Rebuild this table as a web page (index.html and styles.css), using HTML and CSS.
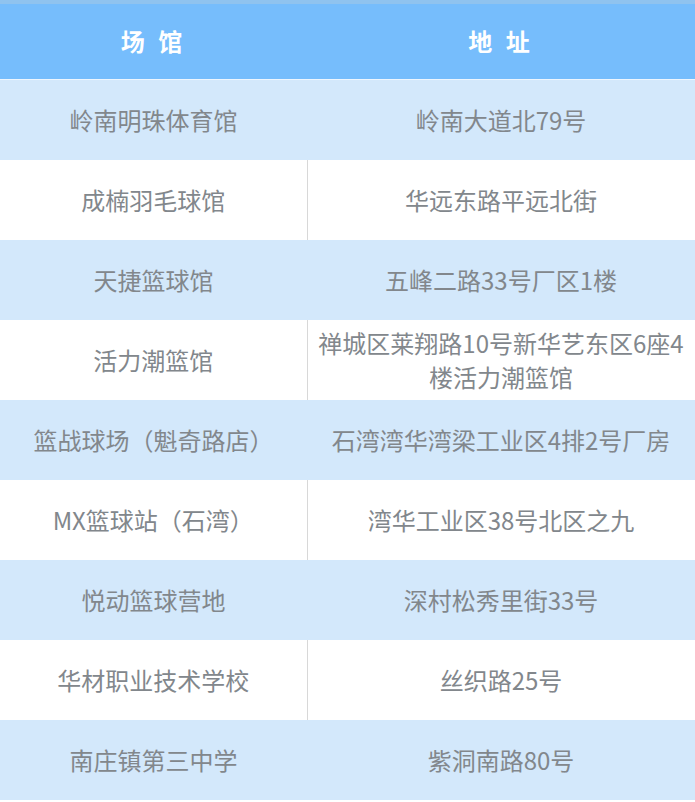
FILE: index.html
```html
<!DOCTYPE html>
<html lang="zh">
<head>
<meta charset="utf-8">
<link rel="stylesheet" href="styles.css">
</head>
<body>
<table class="venues">
  <colgroup><col class="c1"><col class="c2"></colgroup>
  <thead>
    <tr><th>场 馆</th><th>地 址</th></tr>
  </thead>
  <tbody>
    <tr class="blue"><td>岭南明珠体育馆</td><td>岭南大道北79号</td></tr>
    <tr class="white"><td>成楠羽毛球馆</td><td>华远东路平远北街</td></tr>
    <tr class="blue"><td>天捷篮球馆</td><td>五峰二路33号厂区1楼</td></tr>
    <tr class="white"><td>活力潮篮馆</td><td>禅城区莱翔路10号新华艺东区6座4楼活力潮篮馆</td></tr>
    <tr class="blue"><td>篮战球场（魁奇路店）</td><td>石湾湾华湾梁工业区4排2号厂房</td></tr>
    <tr class="white"><td>MX篮球站（石湾）</td><td>湾华工业区38号北区之九</td></tr>
    <tr class="blue"><td>悦动篮球营地</td><td>深村松秀里街33号</td></tr>
    <tr class="white"><td>华材职业技术学校</td><td>丝织路25号</td></tr>
    <tr class="blue"><td>南庄镇第三中学</td><td>紫洞南路80号</td></tr>
  </tbody>
</table>
</body>
</html>
```
FILE: styles.css
```css
html, body {
  margin: 0;
  padding: 0;
  background: #ffffff;
}
.venues {
  width: 695px;
  border-collapse: collapse;
  table-layout: fixed;
  font-family: "Noto Sans CJK SC", "Liberation Sans", sans-serif;
}
.c1 { width: 307px; }
.c2 { width: 388px; }
.venues th {
  height: 80px;
  padding: 0;
  background: #76bdfc;
  box-shadow: inset 0 4px 0 #8fc3ef, inset 0 -1px 0 #eef6fe;
  color: #ffffff;
  font-size: 24px;
  font-weight: bold;
  letter-spacing: 4px;
  text-align: center;
  vertical-align: middle;
}
.venues td {
  height: 80px;
  padding: 0 8px;
  text-align: center;
  vertical-align: middle;
  font-size: 24px;
  line-height: 34px;
  color: #82878c;
}
.blue td {
  background: #d3e8fb;
}
.white td {
  background: #ffffff;
  border-right: 1px solid #d8d8d8;
}
```
